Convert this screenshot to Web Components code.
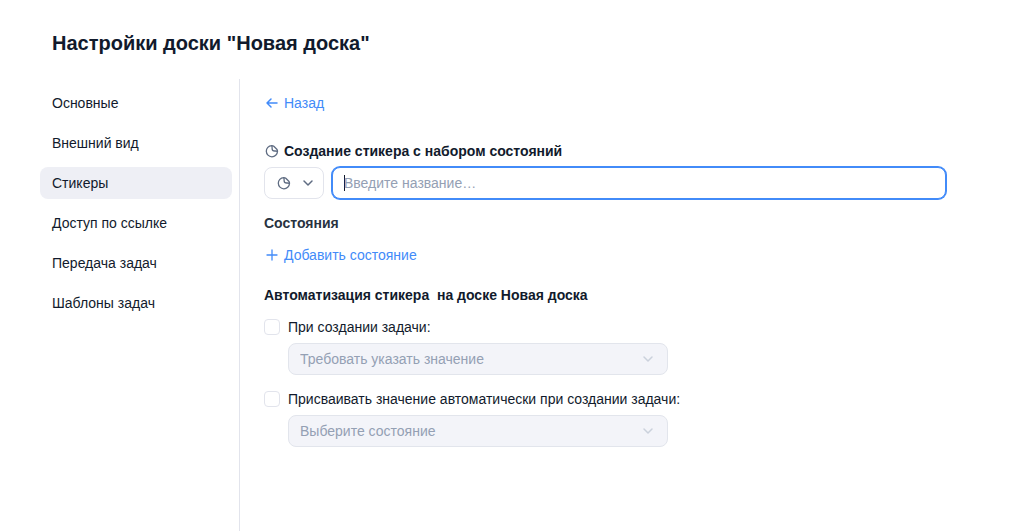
<!DOCTYPE html>
<html lang="ru">
<head>
<meta charset="utf-8">
<meta name="viewport" content="width=device-width, initial-scale=1">
<title>Настройки доски</title>
<style>
  :root {
    --text: #111a2c;
    --accent: #428bf9;
    --muted: #94a0b4;
    --icon: #5f6c82;
    --line: #e2e4ec;
  }
  body {
    margin: 0;
    background: #fff;
    color: var(--text);
    font: 14px/16px "Liberation Sans", Arial, sans-serif;
  }
</style>
</head>
<body>
<board-settings>
  <span slot="title">Настройки доски "Новая доска"</span>
  <settings-nav slot="nav">
    <nav-item>Основные</nav-item>
    <nav-item>Внешний вид</nav-item>
    <nav-item current>Стикеры</nav-item>
    <nav-item>Доступ по ссылке</nav-item>
    <nav-item>Передача задач</nav-item>
    <nav-item>Шаблоны задач</nav-item>
  </settings-nav>
  <sticker-form></sticker-form>
</board-settings>

<script>
const define = (name, html, setup) => {
  const template = document.createElement('template');
  template.innerHTML = '<style>*{box-sizing:border-box}</style>' + html;
  customElements.define(name, class extends HTMLElement {
    connectedCallback() {
      if (this.shadowRoot) return;
      this.attachShadow({ mode: 'open' }).append(template.content.cloneNode(true));
      if (setup) setup(this, this.shadowRoot);
    }
  });
};

const icons = {
  back: '<path d="M13 8H3M7 4 3 8l4 4"/>',
  plus: '<path stroke-width="1.3" d="M8 3v10M3 8h10"/>',
  chevron: '<path d="M4 6 8 10 12 6"/>',
  sticker: '<path stroke-width="1.3" d="M7.6 2.6A5.6 5.6 0 1 0 13.5 8.5M7.6 2.6C8.6 2.5 9.2 2.8 9.8 3.3L12.8 6.3C13.4 6.9 13.6 7.6 13.5 8.5M7.6 2.6C8.2 3.3 8.1 4.4 8.1 5.4C8.1 7.1 9 8 10.7 8C11.8 8 12.8 7.9 13.5 8.5"/>'
};

define('ui-icon', `
  <style>
    :host { display: block; flex: none; width: 16px; height: 16px; }
    svg { display: block; fill: none; stroke: currentColor; stroke-width: 1.5; stroke-linecap: round; stroke-linejoin: round; }
  </style>
  <svg width="16" height="16" viewBox="0 0 16 16" aria-hidden="true"></svg>`,
  (host, root) => { root.querySelector('svg').innerHTML = icons[host.getAttribute('name')]; });

define('board-settings', `
  <style>
    :host { display: flex; flex-direction: column; min-height: 100vh; }
    header { padding: 31px 52px 24px; }
    h1 { margin: 0; font-size: 20px; line-height: 24px; }
    .body { display: flex; flex: 1; }
    aside { flex: none; width: 240px; padding: 8px 7px 8px 40px; border-right: 1px solid var(--line); }
    main { flex: 1; min-width: 0; padding: 8px 73px 32px 24px; }
  </style>
  <header><h1><slot name="title"></slot></h1></header>
  <div class="body">
    <aside><slot name="nav"></slot></aside>
    <main><slot></slot></main>
  </div>`);

define('settings-nav', `
  <style>
    :host { display: block; }
    nav { display: flex; flex-direction: column; gap: 8px; }
  </style>
  <nav aria-label="Разделы"><slot></slot></nav>`);

define('nav-item', `
  <style>
    :host { display: block; }
    a { display: block; padding: 8px 12px; border-radius: 8px; color: inherit; text-decoration: none; }
    :host([current]) a { background: #eeeff5; }
  </style>
  <a href="#"><slot></slot></a>`);

define('icon-picker', `
  <style>
    :host { display: block; flex: none; }
    button { display: flex; align-items: center; gap: 8px; width: 60px; height: 32px; padding: 0 7px 0 11px; border: 1px solid var(--line); border-radius: 8px; background: #fff; color: var(--icon); }
  </style>
  <button type="button" aria-label="Значок стикера"><ui-icon name="sticker"></ui-icon><ui-icon name="chevron"></ui-icon></button>`);

define('name-field', `
  <style>
    :host { display: block; flex: 1; min-width: 0; }
    input { display: block; width: 100%; height: 32px; padding: 0 11px; border: 1px solid var(--line); border-radius: 8px; outline: none; background: #fff; color: var(--text); font: inherit; }
    input::placeholder { color: var(--muted); opacity: 1; }
    input:focus { border-color: var(--accent); box-shadow: 0 0 0 1px var(--accent); }
    /* steady caret while the field is empty */
    input:focus:placeholder-shown { caret-color: transparent; background: linear-gradient(var(--text), var(--text)) 11px 50% / 1px 16px no-repeat #fff; }
  </style>
  <input type="text" aria-label="Название стикера" placeholder="Введите название…">`,
  (host, root) => root.querySelector('input').focus());

define('automation-rule', `
  <style>
    :host { display: block; }
    label { display: flex; align-items: center; gap: 8px; margin-bottom: 8px; }
    input { appearance: none; flex: none; width: 16px; height: 16px; margin: 0; border: 1px solid var(--line); border-radius: 4px; background: #fff; }
    input:checked { border-color: var(--accent); background: var(--accent); }
    .select { display: grid; align-items: center; max-width: 380px; margin-left: 24px; }
    select { grid-area: 1 / 1; appearance: none; width: 100%; height: 32px; padding: 0 32px 0 11px; border: 1px solid #e2e5ec; border-radius: 8px; background: #f3f4f9; color: var(--muted); font: inherit; opacity: 1; }
    ui-icon { grid-area: 1 / 1; justify-self: end; margin-right: 12px; color: #cbd1dc; pointer-events: none; }
  </style>
  <label><input type="checkbox"><slot></slot></label>
  <div class="select"><select disabled><option></option></select><ui-icon name="chevron"></ui-icon></div>`,
  (host, root) => {
    root.querySelector('option').textContent = host.getAttribute('value');
    root.querySelector('select').setAttribute('aria-label', host.textContent);
  });

define('sticker-form', `
  <style>
    :host { display: block; }
    a, .add { display: inline-flex; align-items: center; gap: 4px; padding: 0; border: 0; background: none; color: var(--accent); font: inherit; text-decoration: none; }
    h2, h3 { margin: 0; font-size: 14px; line-height: 16px; }
    .back { display: flex; padding: 8px 0; margin-bottom: 16px; }
    .heading { display: flex; align-items: center; gap: 4px; padding: 8px 0; }
    .heading ui-icon { color: var(--icon); }
    .row { display: flex; gap: 8px; }
    .states { display: grid; justify-items: start; gap: 16px; padding: 16px 0 24px; }
    .states h3 { color: #28323f; }
    .rules { display: grid; gap: 16px; }
    .rules h3 { white-space: pre-wrap; }
  </style>
  <div class="back"><a href="#"><ui-icon name="back"></ui-icon>Назад</a></div>
  <div class="heading"><ui-icon name="sticker"></ui-icon><h2>Создание стикера с набором состояний</h2></div>
  <div class="row"><icon-picker></icon-picker><name-field></name-field></div>
  <section class="states">
    <h3>Состояния</h3>
    <button class="add" type="button"><ui-icon name="plus"></ui-icon>Добавить состояние</button>
  </section>
  <section class="rules">
    <h3>Автоматизация стикера  на доске Новая доска</h3>
    <automation-rule value="Требовать указать значение">При создании задачи:</automation-rule>
    <automation-rule value="Выберите состояние">Присваивать значение автоматически при создании задачи:</automation-rule>
  </section>`);
</script>
</body>
</html>
